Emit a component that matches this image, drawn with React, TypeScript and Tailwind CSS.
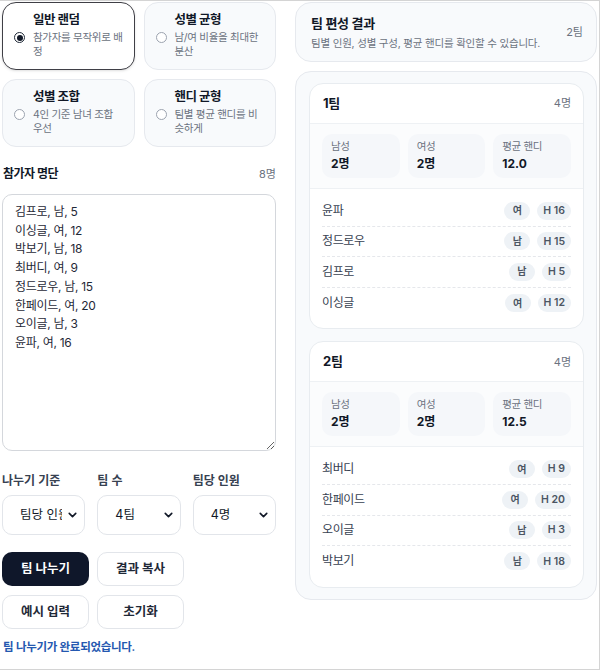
import { ChevronDown } from 'lucide-react';

type Member = { name: string; gender: '남' | '여'; handi: number };

type Team = {
  name: string;
  male: number;
  female: number;
  avg: string;
  members: Member[];
};

// description lines are split the way the card wraps them
const modes = [
  { title: '일반 랜덤', desc: ['참가자를 무작위로 배', '정'], selected: true },
  { title: '성별 균형', desc: ['남/여 비율을 최대한', '분산'], selected: false },
  { title: '성별 조합', desc: ['4인 기준 남녀 조합', '우선'], selected: false },
  { title: '핸디 균형', desc: ['팀별 평균 핸디를 비', '슷하게'], selected: false },
];

const roster = `김프로, 남, 5
이싱글, 여, 12
박보기, 남, 18
최버디, 여, 9
정드로우, 남, 15
한페이드, 여, 20
오이글, 남, 3
윤파, 여, 16`;

const teams: Team[] = [
  {
    name: '1팀',
    male: 2,
    female: 2,
    avg: '12.0',
    members: [
      { name: '윤파', gender: '여', handi: 16 },
      { name: '정드로우', gender: '남', handi: 15 },
      { name: '김프로', gender: '남', handi: 5 },
      { name: '이싱글', gender: '여', handi: 12 },
    ],
  },
  {
    name: '2팀',
    male: 2,
    female: 2,
    avg: '12.5',
    members: [
      { name: '최버디', gender: '여', handi: 9 },
      { name: '한페이드', gender: '여', handi: 20 },
      { name: '오이글', gender: '남', handi: 3 },
      { name: '박보기', gender: '남', handi: 18 },
    ],
  },
];

function ModeCard({ title, desc, selected }: { title: string; desc: string[]; selected: boolean }) {
  return (
    <label
      className={`block h-[68px] rounded-[14px] border px-[11px] pt-[8px] ${
        selected ? 'border-[#3f3f46] bg-white shadow-sm' : 'border-[#e6e9ee] bg-[#f8fafc]'
      }`}
    >
      <div className="pl-[19px] text-[12.5px] font-bold leading-[18px] tracking-[-0.5px] text-[#111827]">{title}</div>
      <div className="mt-[2px] flex gap-[8px]">
        <span
          className={`mt-[1px] flex h-[11px] w-[11px] shrink-0 items-center justify-center rounded-full border ${
            selected ? 'border-[#1f2937]' : 'border-[#9ca3af] bg-white'
          }`}
        >
          {selected && <span className="h-[6px] w-[6px] rounded-full bg-[#111827]" />}
        </span>
        <span className="whitespace-nowrap text-[10.5px] leading-[14px] tracking-[-0.3px] text-[#6b7280]">
          {desc[0]}
          <br />
          {desc[1]}
        </span>
      </div>
    </label>
  );
}

function SelectBox({ label, value, options }: { label: string; value: string; options: string[] }) {
  return (
    <div>
      <div className="mb-[5px] text-[12px] font-semibold leading-[18px] text-[#374151]">{label}</div>
      <div className="relative">
        <select
          defaultValue={value}
          className="h-[40px] w-full appearance-none rounded-[10px] border border-[#e2e5ea] bg-white pl-[17px] pr-[22px] text-[12.5px] text-[#111827] outline-none"
        >
          {options.map((o) => (
            <option key={o}>{o}</option>
          ))}
        </select>
        <ChevronDown
          className="pointer-events-none absolute right-[6px] top-1/2 h-[13px] w-[13px] -translate-y-1/2 text-[#111827]"
          strokeWidth={3}
        />
      </div>
    </div>
  );
}

function TeamCard({ team }: { team: Team }) {
  const stats = [
    { label: '남성', value: `${team.male}명` },
    { label: '여성', value: `${team.female}명` },
    { label: '평균 핸디', value: team.avg },
  ];
  return (
    <div className="overflow-hidden rounded-[14px] border border-[#e8ecf0] bg-white">
      <div className="flex h-[40px] items-center justify-between border-b border-[#eef1f4] pl-[13px] pr-[12px]">
        <span className="text-[13px] font-bold tracking-[-0.3px] text-[#111827]">{team.name}</span>
        <span className="text-[11px] text-[#6b7280]">{team.members.length}명</span>
      </div>
      <div className="grid grid-cols-3 gap-[8px] border-b border-[#eef1f4] bg-[#fbfcfd] px-[12px] py-[10px]">
        {stats.map((s) => (
          <div key={s.label} className="h-[44px] rounded-[10px] bg-[#f5f7fa] px-[9px] pt-[5px]">
            <div className="text-[10.5px] leading-[16px] tracking-[-0.4px] text-[#6b7280]">{s.label}</div>
            <div className="text-[12px] font-bold leading-[17px] text-[#111827]">{s.value}</div>
          </div>
        ))}
      </div>
      <div className="px-[12px] pb-[10px] pt-[7px]">
        {team.members.map((m, i) => (
          <div
            key={m.name}
            className={`flex h-[30.6px] items-center justify-between ${
              i < team.members.length - 1 ? 'border-b border-dashed border-[#e5e7eb]' : ''
            }`}
          >
            <span className="text-[12px] tracking-[-0.4px] text-[#374151]">{m.name}</span>
            <div className="flex gap-[7px]">
              <span className="flex h-[18px] min-w-[26px] items-center justify-center rounded-full bg-[#eef2f6] px-[7px] text-[10px] font-semibold text-[#4b5563]">
                {m.gender}
              </span>
              <span className="flex h-[18px] items-center justify-center rounded-full bg-[#eef2f6] px-[6px] text-[10.5px] font-semibold text-[#4b5563]">
                H {m.handi}
              </span>
            </div>
          </div>
        ))}
      </div>
    </div>
  );
}

export default function App() {
  return (
    <div className="flex h-[670px] w-[600px] gap-[19px] overflow-hidden border-b border-r border-t border-[#d4d4d4] bg-white pl-[2px] pt-[1px] font-['Inter','Noto_Sans_CJK_KR',sans-serif]">
      <div className="w-[274px] shrink-0">
        <div className="grid grid-cols-2 gap-[9px]">
          {modes.map((m) => (
            <ModeCard key={m.title} {...m} />
          ))}
        </div>

        <div className="mt-[18px] flex items-center justify-between pl-[1px]">
          <span className="text-[12px] font-bold leading-[18px] tracking-[-0.5px] text-[#111827]">참가자 명단</span>
          <span className="text-[11px] text-[#6b7280]">8명</span>
        </div>

        <textarea
          defaultValue={roster}
          spellCheck={false}
          className="mt-[11px] block h-[257px] w-full resize-y rounded-[10px] border border-[#d4d7dc] bg-white px-[12px] py-[8px] text-[12px] leading-[18.7px] tracking-[-0.3px] text-[#1f2937] outline-none"
        />

        <div className="mt-[21px] grid grid-cols-3 gap-[12px]">
          <SelectBox label="나누기 기준" value="팀당 인원" options={['팀당 인원', '팀 수']} />
          <SelectBox label="팀 수" value="4팀" options={['2팀', '3팀', '4팀']} />
          <SelectBox label="팀당 인원" value="4명" options={['2명', '3명', '4명']} />
        </div>

        <div className="mt-[17px] grid w-[182px] grid-cols-2 gap-x-[8px] gap-y-[9px]">
          <button className="h-[34px] rounded-[10px] bg-[#0f172a] text-[12.5px] font-semibold text-white">
            팀 나누기
          </button>
          <button className="h-[34px] rounded-[10px] border border-[#e2e5ea] bg-white text-[12.5px] font-semibold text-[#1f2937]">
            결과 복사
          </button>
          <button className="h-[34px] rounded-[10px] border border-[#e2e5ea] bg-white text-[12.5px] font-semibold text-[#1f2937]">
            예시 입력
          </button>
          <button className="h-[34px] rounded-[10px] border border-[#e2e5ea] bg-white text-[12.5px] font-semibold text-[#1f2937]">
            초기화
          </button>
        </div>

        <p className="mt-[10px] pl-[1px] text-[11.5px] font-semibold tracking-[-0.3px] text-[#2458b0]">
          팀 나누기가 완료되었습니다.
        </p>
      </div>

      <div className="w-[302px] shrink-0">
        <div className="flex h-[60px] items-center justify-between rounded-[16px] border border-[#e6e9ee] bg-[#f8fafc] pl-[15px] pr-[13px]">
          <div>
            <div className="mb-[2px] text-[13px] font-bold leading-[20px] tracking-[-0.3px] text-[#111827]">
              팀 편성 결과
            </div>
            <div className="text-[10.5px] leading-[17px] tracking-[-0.2px] text-[#6b7280]">
              팀별 인원, 성별 구성, 평균 핸디를 확인할 수 있습니다.
            </div>
          </div>
          <span className="text-[11px] text-[#6b7280]">2팀</span>
        </div>

        <div className="mt-[9px] flex flex-col gap-[12px] rounded-[16px] border border-[#e6e9ee] bg-[#f8fafc] pb-[11px] pl-[13px] pr-[12px] pt-[11px]">
          {teams.map((t) => (
            <TeamCard key={t.name} team={t} />
          ))}
        </div>
      </div>
    </div>
  );
}
